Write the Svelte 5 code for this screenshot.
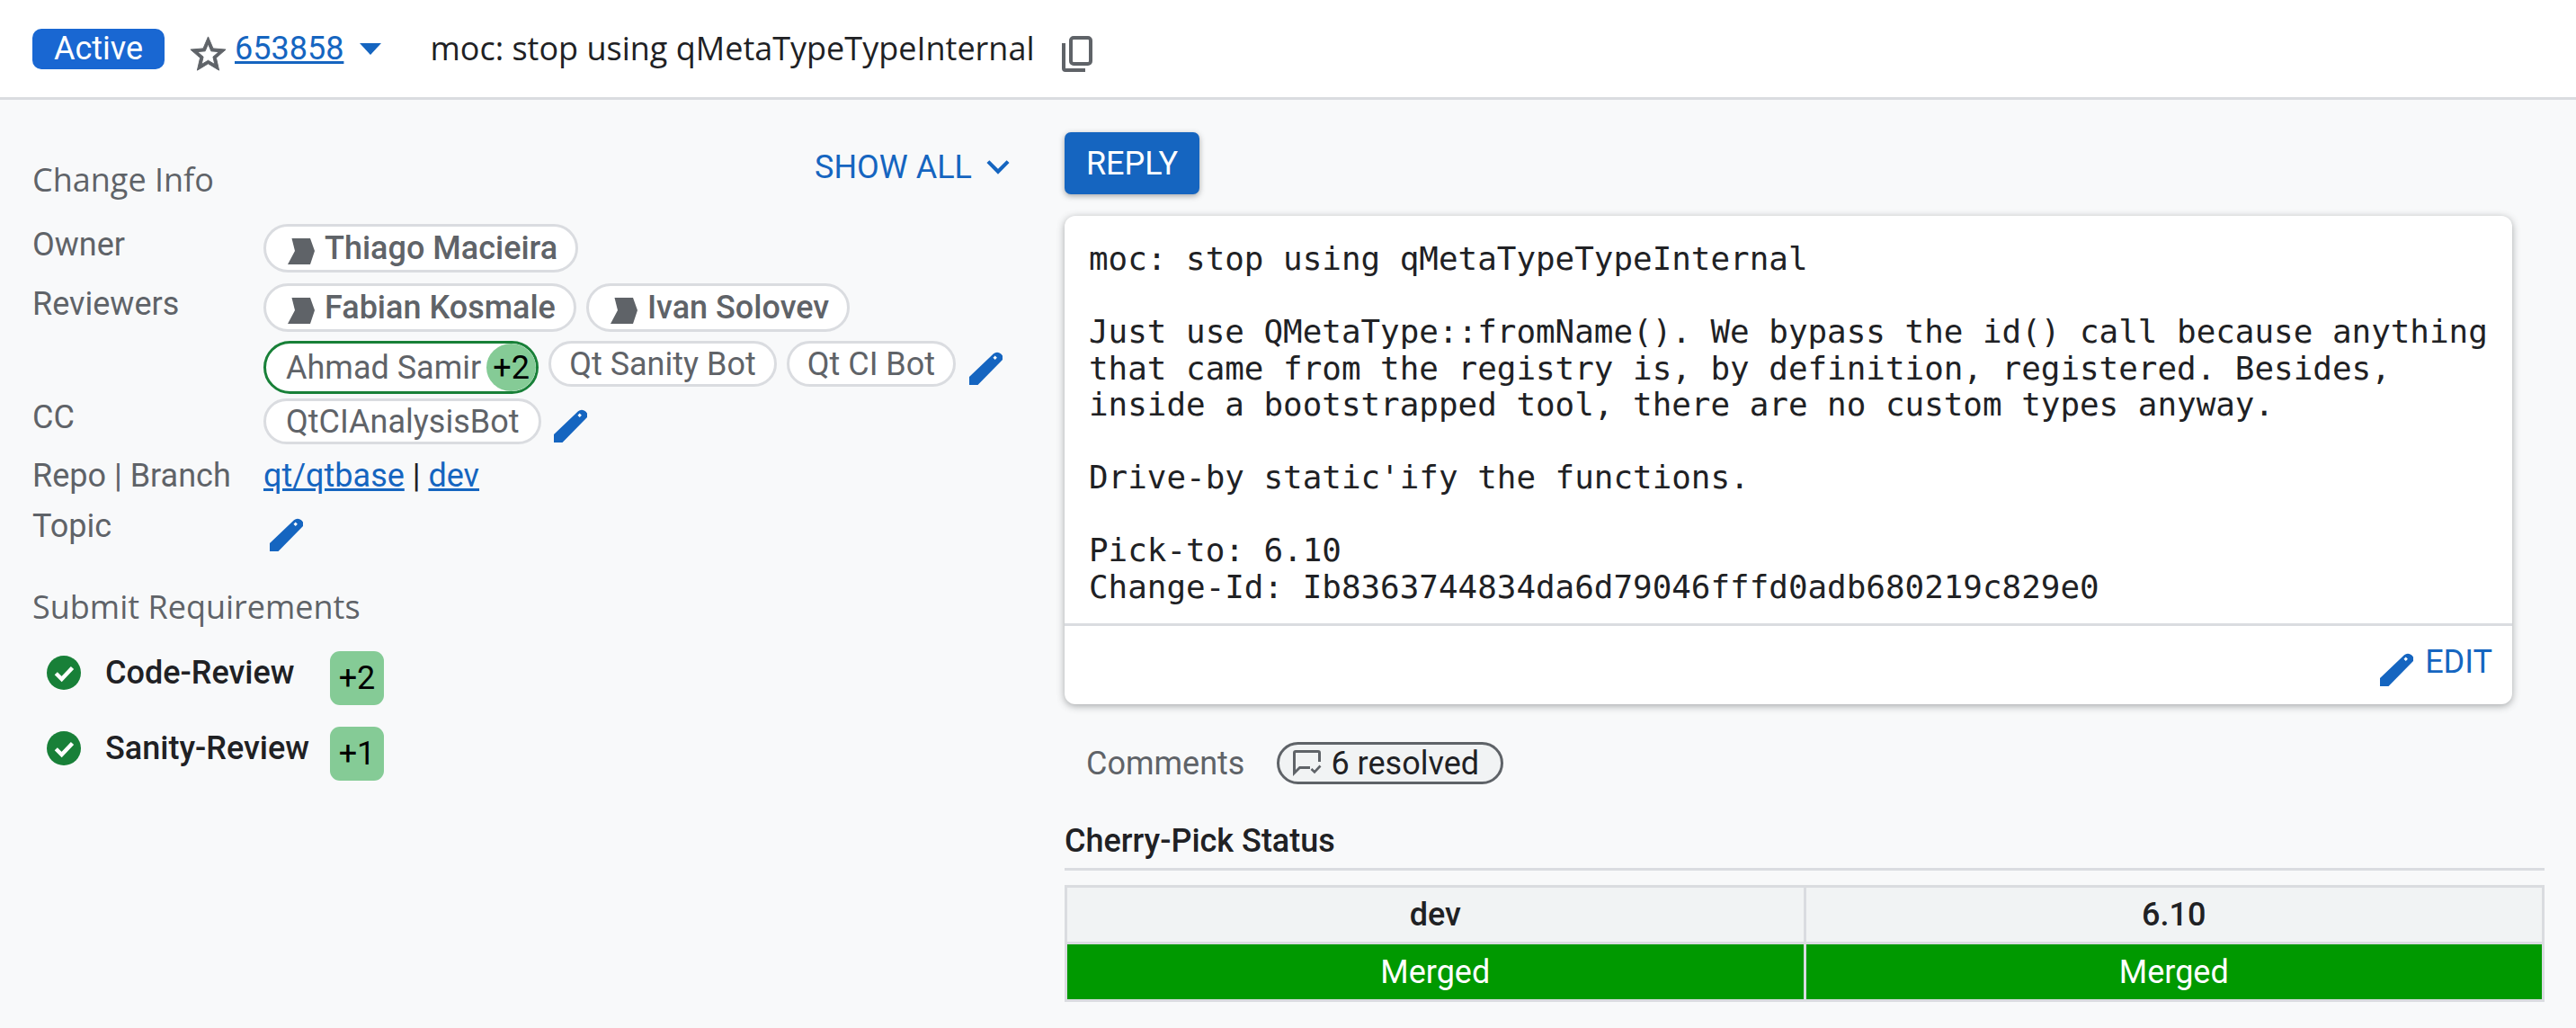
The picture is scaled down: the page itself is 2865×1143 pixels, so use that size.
<script>
  const commitLines = [
    "moc: stop using qMetaTypeTypeInternal",
    "",
    "Just use QMetaType::fromName(). We bypass the id() call because anything",
    "that came from the registry is, by definition, registered. Besides,",
    "inside a bootstrapped tool, there are no custom types anyway.",
    "",
    "Drive-by static'ify the functions.",
    "",
    "Pick-to: 6.10",
    "Change-Id: Ib8363744834da6d79046fffd0adb680219c829e0",
  ];
  const requirements = [
    { name: "Code-Review", vote: "+2" },
    { name: "Sanity-Review", vote: "+1" },
  ];
</script>

{#snippet edit()}
  <svg class="pencil" viewBox="0 0 37 37"><path fill-rule="evenodd" d="M0 28L27 2.2a6 6 0 0 1 8 0l1 1a5 5 0 0 1 0 6.8L9.5 37H0ZM28.7 4.5l-2.2 2.2 2.2 2.2 2.2-2.2Z" /></svg>
{/snippet}

{#snippet chevron()}
  <svg class="account-icon" viewBox="0 0 30 29"><path d="M4.5 0H25L30 14L25 29H0L8 14Z" /></svg>
{/snippet}

<div class="page">
  <header class="top">
    <span class="status">Active</span>
    <svg class="star" viewBox="0 0 24 24"><path d="M22 9.24l-7.19-.62L12 2 9.19 8.63 2 9.24l5.46 4.73L5.82 21 12 17.27 18.18 21l-1.63-7.03L22 9.24zM12 15.4l-3.76 2.27 1-4.28-3.32-2.88 4.38-.38L12 6.1l1.71 4.04 4.38.38-3.32 2.88 1 4.28L12 15.4z" /></svg>
    <a class="number" href="#top">653858</a>
    <span class="caret"></span>
    <span class="subject">moc: stop using qMetaTypeTypeInternal</span>
    <svg class="copy" viewBox="0 0 34 40">
      <rect x="10" y="2" width="22" height="29" rx="3" />
      <path d="M2 8V36a2 2 0 0 0 2 2H26" />
    </svg>
  </header>

  <main class="columns">
    <section class="info">
      <div class="info-head">
        <h3>Change Info</h3>
        <span class="show-all">SHOW ALL
          <svg viewBox="0 0 24 24"><path d="M5 8l7 7 7-7" /></svg>
        </span>
      </div>

      <div class="row">
        <span class="label">Owner</span>
        <div class="chips">
          <span class="chip strong">{@render chevron()}Thiago Macieira</span>
        </div>
      </div>
      <div class="row reviewers">
        <span class="label">Reviewers</span>
        <div class="chips">
          <span class="chip strong">{@render chevron()}Fabian Kosmale</span>
          <span class="chip strong">{@render chevron()}Ivan Solovev</span>
          <span class="chip voted">Ahmad Samir<span class="chip-vote">+2</span></span>
          <span class="chip">Qt Sanity Bot</span>
          <span class="chip">Qt CI Bot</span>
          {@render edit()}
        </div>
      </div>
      <div class="row cc">
        <span class="label">CC</span>
        <div class="chips">
          <span class="chip">QtCIAnalysisBot</span>
          {@render edit()}
        </div>
      </div>
      <div class="row links">
        <span class="label">Repo | Branch</span>
        <span><a href="#top">qt/qtbase</a> | <a href="#top">dev</a></span>
      </div>
      <div class="row">
        <span class="label">Topic</span>
        <div class="chips topic">{@render edit()}</div>
      </div>

      <h3 class="submit-title">Submit Requirements</h3>
      {#each requirements as req}
        <div class="req">
          <svg class="check" viewBox="0 0 24 24"><circle cx="12" cy="12" r="12" /><path d="M6.5 12.5l4 4 7.5-8" /></svg>
          <span class="req-name">{req.name}</span>
          <span class="vote">{req.vote}</span>
        </div>
      {/each}
    </section>

    <section class="main">
      <button class="reply">REPLY</button>
      <div class="commit">
        <pre>{commitLines.join("\n")}</pre>
        <div class="commit-foot">
          {@render edit()}
          <span>EDIT</span>
        </div>
      </div>

      <div class="comments">
        <span class="comments-label">Comments</span>
        <span class="resolved">
          <svg viewBox="0 0 32 29">
            <path class="bubble" d="M3 0H28a3 3 0 0 1 3 3V13H28V3H3V22L7 18H19V21H8L0 29V3a3 3 0 0 1 3-3Z" />
            <path class="tick" d="M20.5 21l3.5 3.5 6.5-7" />
          </svg>
          6 resolved
        </span>
      </div>

      <h4 class="cherry-title">Cherry-Pick Status</h4>
      <table>
        <thead>
          <tr><th>dev</th><th>6.10</th></tr>
        </thead>
        <tbody>
          <tr><td>Merged</td><td>Merged</td></tr>
        </tbody>
      </table>
    </section>
  </main>
</div>

<style>
  :global(body) {
    margin: 0;
    background: #f8f9fa;
  }

  .page {
    width: 2865px;
    height: 1143px;
    overflow: hidden;
    background: #f8f9fa;
    font-family: Roboto, "Liberation Sans", sans-serif;
    font-size: 36px;
    line-height: 42px;
    color: #202124;
  }

  .top {
    box-sizing: border-box;
    height: 111px;
    padding-left: 36px;
    display: flex;
    align-items: center;
    background: #fff;
    border-bottom: 3px solid #dadce0;
  }

  .status {
    width: 147px;
    height: 45px;
    display: flex;
    align-items: center;
    justify-content: center;
    background: #1967d2;
    color: #fff;
    border-radius: 10px;
  }

  .star {
    width: 47px;
    height: 47px;
    fill: #5f6368;
    stroke: #5f6368;
    stroke-width: 0.5;
    margin: 12px 0 0 25px;
  }

  .number {
    margin-left: 6px;
    color: #1565c0;
    text-decoration: underline;
  }

  .caret {
    margin-left: 18px;
    border-left: 12px solid transparent;
    border-right: 12px solid transparent;
    border-top: 13px solid #1565c0;
  }

  .subject {
    margin-left: 54px;
    font-family: "Open Sans", sans-serif;
    font-size: 36px;
  }

  .copy {
    width: 34px;
    height: 40px;
    margin-left: 30px;
    margin-top: 12px;
    fill: none;
    stroke: #5f6368;
    stroke-width: 4;
  }

  .columns {
    display: flex;
    padding-left: 36px;
  }

  .info {
    width: 1088px;
    flex: none;
    padding-top: 54px;
  }

  .info-head {
    display: flex;
    justify-content: space-between;
    align-items: flex-start;
    height: 84px;
    margin-right: -5px;
  }

  h3 {
    margin: 10px 0 0;
    font-family: "Open Sans", sans-serif;
    font-weight: 400;
    font-size: 36px;
    line-height: 49px;
    color: #5f6368;
  }

  .show-all {
    display: flex;
    align-items: center;
    gap: 10px;
    color: #1565c0;
  }

  .show-all svg {
    width: 38px;
    height: 38px;
    fill: none;
    stroke: #1565c0;
    stroke-width: 2.6;
  }

  .row {
    display: flex;
    margin-bottom: 12px;
  }

  .reviewers {
    margin-bottom: 5px;
  }

  .label {
    width: 257px;
    flex: none;
    color: #5f6368;
    line-height: 46px;
  }

  .cc .label {
    line-height: 42px;
  }

  .chips {
    display: flex;
    flex-wrap: wrap;
    align-items: flex-start;
    gap: 10px 11px;
    width: 830px;
  }

  .chip {
    display: inline-flex;
    align-items: center;
    box-sizing: border-box;
    height: 51px;
    padding: 0 20px;
    border: 3px solid #dadce0;
    border-radius: 26px;
    background: #fff;
    color: #5f6368;
  }

  .cc .chip {
    padding: 0 22px;
  }

  .strong {
    height: 54px;
    border-radius: 27px;
    padding: 0 20px 0 24px;
    font-weight: 500;
  }

  .account-icon {
    width: 30px;
    height: 29px;
    fill: #5f6368;
    margin-right: 11px;
    margin-top: 6px;
  }

  .voted {
    height: 59px;
    border-color: #188038;
    border-radius: 30px;
    padding: 0 0 0 22px;
    overflow: hidden;
  }

  .chip-vote {
    display: flex;
    align-items: center;
    justify-content: center;
    width: 55px;
    height: 53px;
    margin: 0 0 0 6px;
    border-radius: 50%;
    background: #85cb96;
    color: #000;
  }

  .pencil {
    width: 37px;
    height: 37px;
    fill: #1565c0;
    flex: none;
    margin: 12px 0 0 4px;
  }

  .cc .pencil {
    margin-left: 3px;
  }

  .links {
    margin-top: 12px;
    margin-bottom: 10px;
  }

  .links a {
    color: #1565c0;
    text-decoration: underline;
  }

  .links span:last-child {
    line-height: 46px;
  }

  .topic .pencil {
    margin: 14px 0 0 7px;
  }

  .submit-title {
    margin: 37px 0 28px;
  }

  .req {
    display: flex;
    align-items: flex-start;
    height: 84px;
    padding-left: 16px;
  }

  .check {
    width: 38px;
    height: 38px;
    margin-top: 2px;
    flex: none;
  }

  .check circle {
    fill: #188038;
  }

  .check path {
    fill: none;
    stroke: #fff;
    stroke-width: 2.8;
  }

  .req-name {
    width: 250px;
    flex: none;
    margin-left: 27px;
    font-weight: 500;
  }

  .vote {
    width: 60px;
    height: 60px;
    flex: none;
    display: flex;
    align-items: center;
    justify-content: center;
    margin-top: -3px;
    border-radius: 11px;
    background: #85cb96;
    color: #000;
  }

  .main {
    width: 1646px;
    margin-left: 60px;
    flex: none;
    padding-top: 36px;
  }

  .reply {
    display: block;
    width: 150px;
    height: 69px;
    border: none;
    border-radius: 7px;
    background: #1565c0;
    color: #fff;
    font-family: Roboto, sans-serif;
    font-size: 36px;
    box-shadow: 0 2px 6px rgba(60, 64, 67, 0.45);
  }

  .commit {
    margin-top: 24px;
    width: 1610px;
    background: #fff;
    border-radius: 12px;
    box-shadow: 0 2px 8px rgba(60, 64, 67, 0.45);
  }

  pre {
    margin: 0;
    padding: 28px 27px 0;
    height: 456px;
    box-sizing: border-box;
    border-bottom: 3px solid #dadce0;
    font-family: "DejaVu Sans Mono", "Liberation Mono", monospace;
    font-size: 35.9px;
    line-height: 40.5px;
  }

  .commit-foot {
    height: 87px;
    display: flex;
    justify-content: flex-end;
    align-items: flex-start;
    gap: 13px;
    padding-right: 22px;
    color: #1565c0;
  }

  .commit-foot .pencil {
    margin: 30px 0 0;
  }

  .commit-foot span {
    margin-top: 19px;
  }

  .comments {
    display: flex;
    align-items: center;
    margin-top: 42px;
    padding-left: 24px;
  }

  .comments-label {
    color: #5f6368;
  }

  .resolved {
    display: inline-flex;
    align-items: center;
    box-sizing: border-box;
    margin-left: 36px;
    height: 47px;
    padding: 0 24px 0 15px;
    gap: 10px;
    border: 3px solid #5f6368;
    border-radius: 24px;
    background: #f1f3f4;
  }

  .resolved svg {
    width: 32px;
    height: 29px;
  }

  .bubble {
    fill: #5f6368;
  }

  .tick {
    fill: none;
    stroke: #5f6368;
    stroke-width: 2.6;
  }

  .cherry-title {
    margin: 42px 0 0;
    padding-bottom: 9px;
    border-bottom: 3px solid #dadce0;
    font-size: 36px;
    font-weight: 500;
  }

  table {
    width: 100%;
    margin-top: 16px;
    border-collapse: collapse;
    border: 3px solid #dadce0;
    table-layout: fixed;
  }

  th,
  td {
    height: 60px;
    padding: 0;
    text-align: center;
    border-left: 3px solid #dadce0;
  }

  th {
    background: #f1f3f4;
    font-weight: 500;
    border-bottom: 3px solid #dadce0;
  }

  td {
    height: 61px;
    background: #009900;
    color: #fff;
  }
</style>
